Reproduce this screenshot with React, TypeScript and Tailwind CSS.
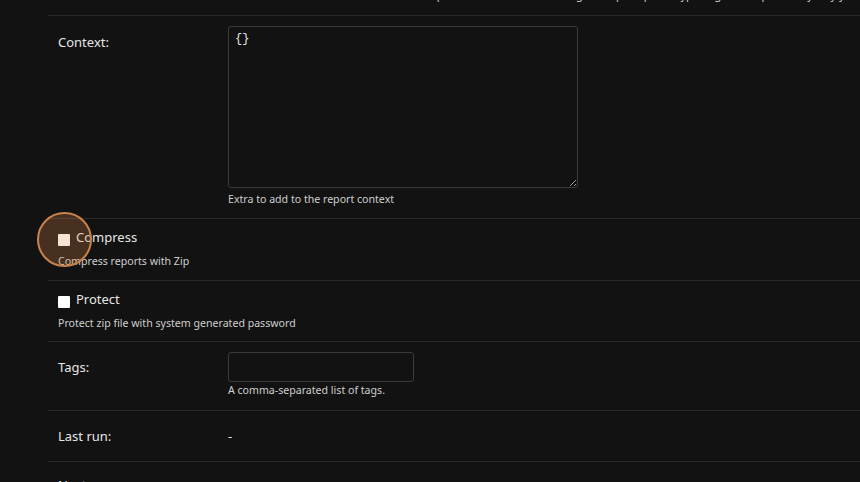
import React from 'react';

const font = { fontFamily: '"Noto Sans", "Open Sans", sans-serif' };

export default function App() {
  return (
    <div className="min-h-[482px] w-[860px] overflow-hidden bg-[#121212] text-[#e6e6e6]" style={font}>
      <div className="h-[15px] overflow-hidden pl-[48px]">
        <p className="-mt-[12px] whitespace-nowrap pl-[367px] text-[11px] leading-[14px] text-[#cfcfcf]">
          Template to use when rendering the report, pick a type, it gives output in any way you expect, or options
        </p>
      </div>
      <div className="ml-[48px]">
        {/* Context */}
        <div className="flex border-t border-[#2a2a2a] pb-[12px] pl-[10px] pt-[10px]">
          <label className="w-[170px] pt-[8px] text-[13px] leading-[16px]">Context:</label>
          <div>
            <textarea
              defaultValue="{}"
              className="block h-[162px] w-[350px] rounded-[3px] border border-[#3a3a3a] bg-[#121212] px-[6px] py-[4px] font-mono text-[12px] leading-[16px] text-[#e6e6e6] outline-none"
            />
            <p className="mt-[4px] text-[10.6px] leading-[14px] text-[#cfcfcf]">Extra to add to the report context</p>
          </div>
        </div>

        {/* Compress */}
        <div className="relative border-t border-[#2a2a2a] pb-[12px] pl-[10px] pt-[9px]">
          <div className="flex items-center gap-[6px]">
            <input type="checkbox" className="mt-[6px] h-[12px] w-[12px] appearance-none rounded-[1px] bg-white" />
            <span className="text-[13px] leading-[18px]">Compress</span>
          </div>
          <p className="mt-[8px] text-[10.6px] leading-[14px] text-[#cfcfcf]">Compress reports with Zip</p>
          <div className="pointer-events-none absolute left-[-11px] top-[-7px] h-[55px] w-[55px] rounded-full border-2 border-[#c8834b] bg-[rgba(230,140,70,0.25)]" />
        </div>

        {/* Protect */}
        <div className="border-t border-[#2a2a2a] pb-[11px] pl-[10px] pt-[9px]">
          <div className="flex items-center gap-[6px]">
            <input type="checkbox" className="mt-[6px] h-[12px] w-[12px] appearance-none rounded-[1px] bg-white" />
            <span className="text-[13px] leading-[18px]">Protect</span>
          </div>
          <p className="mt-[8px] text-[10.6px] leading-[14px] text-[#cfcfcf]">Protect zip file with system generated password</p>
        </div>

        {/* Tags */}
        <div className="flex border-t border-[#2a2a2a] pb-[13px] pl-[10px] pt-[10px]">
          <label className="w-[170px] pt-[7px] text-[13px] leading-[16px]">Tags:</label>
          <div>
            <input
              type="text"
              className="block h-[30px] w-[186px] rounded-[3px] border border-[#3a3a3a] bg-[#121212] px-[6px] text-[13px] text-[#e6e6e6] outline-none"
            />
            <p className="mt-[1px] text-[10.6px] leading-[14px] text-[#cfcfcf]">A comma-separated list of tags.</p>
          </div>
        </div>

        {/* Last run */}
        <div className="flex border-t border-[#2a2a2a] pb-[17px] pl-[10px] pt-[17px]">
          <label className="w-[170px] text-[13px] leading-[16px]">Last run:</label>
          <span className="text-[13px] leading-[16px]">-</span>
        </div>

        <div className="flex border-t border-[#2a2a2a] pl-[10px] pt-[15px]">
          <label className="w-[170px] text-[13px] leading-[16px]">Next run:</label>
          <span className="text-[13px] leading-[16px]">-</span>
        </div>
      </div>
    </div>
  );
}
